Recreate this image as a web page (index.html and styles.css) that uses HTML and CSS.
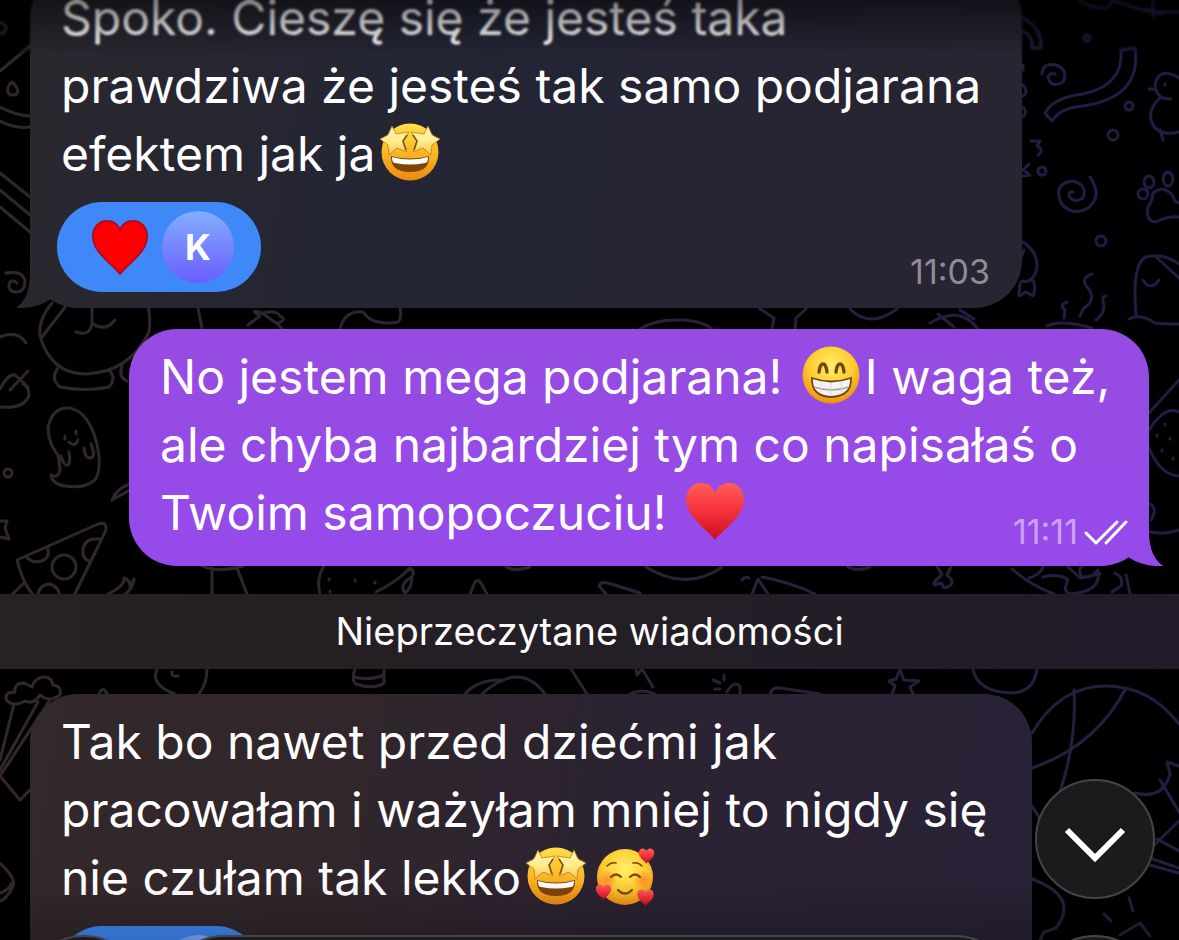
FILE: index.html
```html
<!DOCTYPE html>
<html lang="pl">
<head>
    <meta charset="UTF-8">
    <meta name="viewport" content="width=device-width, initial-scale=1.0">
    <title>Czat</title>
    <link rel="stylesheet" href="styles.css">
</head>
<body>

<!-- Shared shapes -->
<svg class="defs" width="0" height="0" aria-hidden="true">
    <defs>
        <radialGradient id="face" cx="50%" cy="35%" r="65%">
            <stop offset="0" stop-color="#fff06a"/>
            <stop offset="0.6" stop-color="#fdcb2e"/>
            <stop offset="1" stop-color="#ee8f12"/>
        </radialGradient>
        <linearGradient id="face-warm" x1="0" y1="0" x2="0" y2="1">
            <stop offset="0" stop-color="#ffe04a"/>
            <stop offset="0.5" stop-color="#fbb826"/>
            <stop offset="1" stop-color="#ec8a12"/>
        </linearGradient>
        <linearGradient id="star" x1="0" y1="0" x2="0" y2="1">
            <stop offset="0" stop-color="#fff6c0"/>
            <stop offset="0.55" stop-color="#ffeb8a"/>
            <stop offset="1" stop-color="#fcc24a"/>
        </linearGradient>
        <linearGradient id="heart" x1="0" y1="0" x2="0" y2="1">
            <stop offset="0" stop-color="#ff5f58"/>
            <stop offset="0.5" stop-color="#f5303a"/>
            <stop offset="1" stop-color="#c80d22"/>
        </linearGradient>
        <radialGradient id="blush">
            <stop offset="0" stop-color="#ff7a2a" stop-opacity="0.8"/>
            <stop offset="1" stop-color="#ff7a2a" stop-opacity="0"/>
        </radialGradient>
        <symbol id="heart-shape" viewBox="0 0 60 60">
            <path d="M30 59C24 50 1 36 1 19C1 8 8 2 16 2C23 2 28 6 30 12C32 6 37 2 44 2C52 2 59 8 59 19C59 36 36 50 30 59Z"/>
        </symbol>
        <symbol id="star-struck" viewBox="0 0 60 60">
            <circle cx="30" cy="30" r="28.5" fill="url(#face-warm)"/>
            <path d="M11 34Q30 39 49 34Q50 50 30 50Q10 50 11 34Z" fill="#804508"/>
            <path d="M12 35Q30 40 48 35Q48 41 45 41Q30 44 15 41Q12 41 12 35Z" fill="#fff"/>
            <g fill="url(#star)" stroke="#c07a12" stroke-width="0.8" stroke-linejoin="round">
                <path d="M12 4L16 12L29 10L23 19L27 30L17 26L9 33L8 23L0 17L8 13Z"/>
                <path d="M48 4L44 12L31 10L37 19L33 30L43 26L51 33L52 23L60 17L52 13Z"/>
            </g>
            <path d="M27 13L23 19L26 28M33 13L37 19L34 28" fill="none" stroke="#80500b" stroke-width="1.6"/>
        </symbol>
        <symbol id="grin" viewBox="0 0 60 60">
            <circle cx="30" cy="30" r="28.5" fill="url(#face)"/>
            <path d="M18 27Q19 19 22 19Q25 19 26 27M35 27Q36 19 39 19Q42 19 43 27" fill="none" stroke="#754707" stroke-width="3.4" stroke-linecap="round"/>
            <path d="M11 33Q30 40 50 33Q51 51 30 52Q10 51 11 33Z" fill="#f4f2f2" stroke="#72450c" stroke-width="1.8"/>
            <path d="M13 42Q30 48 48 42" fill="none" stroke="#a9a29c" stroke-width="1.4"/>
            <path d="M20 36V48M40 36V48M30 38V51" fill="none" stroke="#dcd8d5" stroke-width="0.8"/>
        </symbol>
        <symbol id="loving" viewBox="0 0 60 60">
            <circle cx="30" cy="31" r="28" fill="url(#face)"/>
            <circle cx="12" cy="34" r="10" fill="url(#blush)"/>
            <circle cx="48" cy="34" r="10" fill="url(#blush)"/>
            <g fill="none" stroke="#7c480c" stroke-linecap="round">
                <path d="M12 20Q16 16 21 17M38 17Q43 16 47 20" stroke-width="1.6"/>
                <path d="M16 31Q21 26 26 31M35 31Q40 26 45 31" stroke-width="2.2"/>
                <path d="M23 44Q30 51 37 44" stroke-width="2.2"/>
            </g>
            <use href="#heart-shape" x="43" y="2" width="17" height="16" fill="url(#heart)"/>
            <use href="#heart-shape" x="0" y="38" width="17" height="16" fill="url(#heart)"/>
            <use href="#heart-shape" x="42" y="43" width="17" height="17" fill="url(#heart)"/>
        </symbol>
        <symbol id="tail" viewBox="0 0 40 44">
            <path d="M14 0V10Q14 34 0 44Q20 45 35 35L40 20V0Z"/>
        </symbol>
    </defs>
</svg>

<!-- Doodle wallpaper -->
<svg class="wallpaper" viewBox="0 0 1179 940" preserveAspectRatio="xMidYMid slice" aria-hidden="true">
    <defs>
        <linearGradient id="ink" gradientUnits="userSpaceOnUse" x1="0" y1="700" x2="1179" y2="300">
            <stop offset="0" stop-color="#33272b"/>
            <stop offset="0.5" stop-color="#2a2335"/>
            <stop offset="1" stop-color="#231b42"/>
        </linearGradient>
    </defs>
    <g stroke="url(#ink)">
        <!-- left edge -->
        <path d="M0 23Q7 24 6 29T0 33M0 71L30 46M0 107Q15 115 30 116M0 121Q15 129 30 127M0 173L30 197M0 190L30 215M0 207L30 232"/>
        <path d="M12 82C6 87 6 95 13 95S19 88 12 82Z"/>
        <path d="M6 273Q24 270 25 282Q24 293 15 292Q8 291 9 284Q12 278 17 283"/>
        <!-- bear -->
        <path d="M52 303Q38 320 40 336Q51 374 86 374Q130 372 149 332Q151 318 148 306M42 337L66 306M76 332Q90 337 92 323V308M92 323Q105 333 115 320M198 308L202 328"/>
        <path d="M58 368Q50 379 60 387Q85 392 109 387Q117 378 109 370M122 366Q118 377 127 381"/>
        <path d="M0 337Q18 330 26 343M0 389Q10 371 16 376L28 387M10 390L28 371M0 407Q25 409 29 395Q29 387 23 384"/>
        <!-- ghost -->
        <path d="M62 460Q48 445 48 428Q52 407 69 408Q85 410 94 434Q104 465 95 480Q84 489 65 486Q52 484 51 475Q58 479 60 470Q60 467 58 455"/>
        <path d="M65 436V439M76 431V434M69 442Q75 448 78 440M61 456Q64 466 67 465Q71 465 69 452M84 448Q85 459 91 458Q96 456 91 444"/>
        <circle cx="8" cy="473" r="4"/>
        <path d="M0 521L7 521L5 528L9 539L0 537M130 484Q117 488 112 500L130 490"/>
        <!-- pizza -->
        <path d="M17 560L98 524Q107 521 106 530L72 600M17 560Q23 584 34 596M26 556Q32 565 44 560Q51 555 47 547M101 539Q85 537 83 549Q82 559 89 561M0 606L24 583"/>
        <circle cx="64" cy="567" r="12"/>
        <path d="M38 594Q40 584 50 584Q59 587 60 596M108 594Q125 586 124 578Q130 580 130 586L134 579Q134 588 122 597"/>
        <path d="M212 568V594M237 568L247 594M202 566Q218 573 243 566M320 594Q316 578 324 566M376 592Q398 581 410 568Q418 574 407 580Q400 587 405 593Q412 588 412 577M470 594L475 582Q479 578 482 585L487 594"/>
        <path d="M329 579V580M355 580V581M375 582V583M330 591V592"/>
        <!-- strip between first two bubbles -->
        <path d="M248 325L260 316Q248 308 262 313Q277 310 280 316Q288 320 277 323L282 329M262 313L276 323M340 329Q345 310 363 312Q372 326 398 322Q402 318 400 308"/>
        <path d="M640 329Q655 319 683 320Q705 322 712 329M760 309L774 318L772 329M795 329L796 318L806 309M850 309Q870 329 897 309M930 323Q960 305 978 329M938 314L954 327M960 310L974 319"/>
        <!-- popcorn -->
        <path d="M10 703Q3 699 8 693L15 692Q14 683 24 683L32 687Q35 677 45 677Q52 678 53 685Q62 686 60 695Q49 703 40 695Q34 705 25 701Q16 706 10 703M14 704L0 760M38 702L0 770M50 700L0 776L20 800L30 790M99 694Q103 685 107 694"/>
        <path d="M0 863Q16 878 13 886Q7 899 0 901M0 893Q9 890 11 884"/>
        <path d="M157 669Q150 685 175 694M207 669Q207 684 199 694M172 672Q171 677 178 676M355 669Q351 680 356 684Q374 690 384 683V669M354 677Q370 681 384 675M465 694Q477 680 500 680M482 694Q520 660 545 694"/>
        <!-- strip under the outgoing bubble -->
        <path d="M506 567Q516 572 530 567M646 567Q687 592 722 567M606 594L599 586Q600 581 608 583L640 593M742 580Q745 576 749 578M752 594L758 579L768 594M762 577Q790 582 815 594M848 567Q858 572 870 567M937 566L942 575Q931 583 935 585Q940 582 942 584Q943 590 949 586Q956 582 947 575L951 567"/>
        <path d="M571 669L587 694M636 669L637 675L642 669L653 687M630 694Q642 688 655 694M715 689H720M713 680L720 683M724 675V680M727 692Q734 680 740 686V694M770 694Q772 687 780 688L820 694"/>
        <path d="M900 670L904 680L919 681L910 687L913 694M900 670L896 679L889 681L895 686L892 694M973 669Q977 692 1012 693Q1034 692 1037 669"/>
        <!-- right edge, upper half -->
        <path d="M1080 1Q1100 12 1110 6Q1113 1 1110 0L1150 12H1179M1153 0V17M1147 9L1160 14"/>
        <path d="M1023 18Q1042 28 1041 48H1032Q1033 36 1023 31"/>
        <path d="M1042 74Q1043 62 1056 65Q1069 70 1063 82Q1051 89 1048 77Q1050 72 1055 74"/>
        <path d="M1121 50L1135 48Q1142 98 1082 106Q1060 108 1052 121L1045 113Q1054 97 1083 94Q1124 85 1121 50Z"/>
        <circle cx="1087" cy="38" r="3"/>
        <circle cx="1129" cy="106" r="4"/>
        <circle cx="1113" cy="135" r="5"/>
        <circle cx="1101" cy="241" r="5"/>
        <circle cx="1042" cy="171" r="4"/>
        <path d="M1031 141L1040 141L1037 146Q1045 150 1038 155M1029 164L1023 170L1030 175L1023 176M1023 65V70M1023 85Q1029 92 1023 96M1023 107Q1028 112 1023 117"/>
        <path d="M1090 177Q1103 196 1088 208Q1072 217 1061 203Q1053 183 1073 181Q1088 185 1083 198Q1074 204 1069 196Q1069 191 1073 192"/>
        <path d="M1179 78Q1160 66 1155 84Q1155 94 1163 98L1171 99M1160 98Q1144 113 1155 128Q1165 136 1179 132M1149 89H1156M1160 130L1163 140M1165 84V85"/>
        <ellipse cx="1149" cy="182" rx="5" ry="6"/>
        <ellipse cx="1168" cy="179" rx="5" ry="7"/>
        <circle cx="1143" cy="194" r="5"/>
        <path d="M1179 203Q1174 202 1173 196Q1163 184 1153 193Q1152 202 1148 207Q1145 221 1156 222Q1167 216 1179 217"/>
        <path d="M1023 242Q1038 252 1037 268Q1033 284 1022 281M1020 283L1019 296L1026 292L1033 296Q1037 286 1032 279M1024 250L1020 260"/>
        <path d="M1092 274Q1080 278 1087 287Q1098 299 1083 309L1080 316M1106 296Q1101 296 1104 306Q1104 314 1096 320M1067 302Q1059 305 1065 310L1064 318M1047 326Q1060 319 1092 328"/>
        <path d="M1136 315Q1131 255 1151 256Q1165 254 1179 264M1156 257L1179 278M1143 280Q1150 292 1159 280M1129 319Q1140 313 1155 323Q1165 324 1179 324"/>
        <!-- right edge, lower half -->
        <path d="M1149 413L1179 380M1149 430Q1165 405 1179 412M1149 448Q1160 475 1179 476M1157 435V436M1165 424V425M1170 438V439M1162 450V451M1173 458V459"/>
        <path d="M1150 504Q1158 508 1151 520M1150 532Q1165 535 1179 530M1012 569Q1030 585 1054 594M1029 578Q1040 575 1043 567M1043 577Q1060 573 1068 580Q1062 592 1070 594Q1102 592 1098 570Q1090 580 1081 576Q1077 567 1085 565M1068 567L1080 578L1100 574M1115 573Q1124 577 1121 586L1112 592M1126 575L1130 594"/>
        <path d="M1032 733Q1060 686 1105 686Q1150 686 1179 724M1032 768Q1096 746 1126 688M1074 690Q1077 740 1060 792M1032 806L1042 822"/>
        <path d="M1135 793Q1163 800 1170 774L1167 762L1179 766M1160 780L1179 812M1150 849L1179 821M1157 839L1179 851M1150 858L1179 868M1150 865L1179 873"/>
        <path d="M1032 879Q1080 897 1056 928L1044 932L1040 940M1129 898L1133 911M1104 914L1111 921M1120 935L1140 923L1150 936"/>
    </g>
</svg>

<main class="chat">
    <article class="bubble bubble-in bubble-first">
        <p>Spoko. Cieszę się że jesteś taka<br>prawdziwa że jesteś tak samo podjarana<br>efektem jak ja<svg class="emoji" role="img" aria-label="🤩"><use href="#star-struck"/></svg></p>
        <button class="reaction" type="button">
            <svg class="reaction-heart" viewBox="0 0 60 60" aria-hidden="true"><use href="#heart-shape" width="60" height="60"/></svg>
            <span class="avatar">K</span>
        </button>
        <time class="time">11:03</time>
        <svg class="tail tail-left" aria-hidden="true"><use href="#tail"/></svg>
    </article>

    <article class="bubble bubble-out">
        <p>No jestem mega podjarana! <svg class="emoji" role="img" aria-label="😁"><use href="#grin"/></svg>I waga też,<br>ale chyba najbardziej tym co napisałaś o<br>Twoim samopoczuciu! <svg class="emoji emoji-heart" role="img" aria-label="❤️"><use href="#heart-shape"/></svg></p>
        <div class="time">
            <time>11:11</time>
            <svg class="checks" viewBox="0 0 44 26" aria-hidden="true"><path d="M2 14L12 24L33 3M22 24L42 3"/></svg>
        </div>
        <svg class="tail tail-right" aria-hidden="true"><use href="#tail"/></svg>
    </article>

    <h2 class="unread">Nieprzeczytane wiadomości</h2>

    <article class="bubble bubble-in bubble-last">
        <p>Tak bo nawet przed dziećmi jak<br>pracowałam i ważyłam mniej to nigdy się<br>nie czułam tak lekko<svg class="emoji" role="img" aria-label="🤩"><use href="#star-struck"/></svg><svg class="emoji" role="img" aria-label="🥰"><use href="#loving"/></svg></p>
        <button class="reaction" type="button">
            <svg class="reaction-heart" viewBox="0 0 60 60" aria-hidden="true"><use href="#heart-shape" width="60" height="60"/></svg>
            <span class="avatar"></span>
        </button>
    </article>
</main>

<div class="fade fade-top"></div>
<div class="fade fade-bottom"></div>

<div class="controls">
    <button class="round-btn" type="button" aria-label="Przewiń w dół">
        <svg viewBox="0 0 60 34" aria-hidden="true"><path d="M2 2L30 30L58 2"/></svg>
    </button>
    <form class="composer">
        <button class="round-btn" type="button" aria-label="Załącz"></button>
        <input class="field" type="text" aria-label="Wiadomość">
        <button class="round-btn" type="button" aria-label="Nagraj"></button>
    </form>
</div>

</body>
</html>
```

FILE: styles.css
```css
html,
body {
    height: 100%;
    margin: 0;
    overflow: hidden;
}
body {
    position: relative;
    background-color: #000;
    color: #fff;
    font-family: Inter, Roboto, sans-serif;
}
.defs {
    position: absolute;
}
.wallpaper {
    position: absolute;
    top: 0;
    left: 0;
    width: 100%;
    height: 100%;
    fill: none;
    stroke-width: 3;
    stroke-linecap: round;
    stroke-linejoin: round;
}
.chat {
    position: relative;
    display: flex;
    flex-direction: column;
    margin-top: -30px;
}

/* Bubbles */
.bubble {
    position: relative;
    box-sizing: border-box;
    padding: 14px 31px 19px;
    border-radius: 48px;
}
.bubble p {
    margin: 0;
    font-size: 48px;
    line-height: 68px;
    white-space: nowrap;
}
.bubble-in {
    align-self: flex-start;
    margin-left: 30px;
}
.bubble-first {
    width: calc(100% - 187px);
    padding-bottom: 16px;
    background: linear-gradient(100deg, #2a282e 0%, #232535 45%, #292431 100%);
}
.bubble-out {
    align-self: flex-end;
    width: calc(100% - 159px);
    margin: 21px 30px 28px 0;
    background: linear-gradient(#964be1, #964aeb);
}
.bubble-last {
    width: calc(100% - 177px);
    margin-top: 25px;
    background: linear-gradient(100deg, #33282a 0%, #30262b 30%, #2b2232 60%, #292136 100%);
}
.tail {
    position: absolute;
    bottom: 0;
    width: 40px;
    height: 44px;
}
.tail-left {
    left: -14px;
    fill: #2a282e;
}
.tail-right {
    right: -14px;
    fill: #964aeb;
    transform: scaleX(-1);
}
.emoji {
    width: 60px;
    height: 60px;
    margin: 0 4px 0 5px;
    vertical-align: -11px;
}
.emoji-heart {
    fill: url(#heart);
}
.time {
    position: absolute;
    z-index: 1;
    right: 32px;
    bottom: 16px;
    color: #8e8c98;
    font-size: 34px;
    line-height: 40px;
}
.bubble-out .time {
    display: flex;
    align-items: center;
    gap: 6px;
    right: 21px;
    bottom: 14px;
    color: #cba2f3;
}
.checks {
    width: 44px;
    height: 26px;
    overflow: visible;
    fill: none;
    stroke: #fff;
    stroke-width: 3;
    stroke-linecap: round;
    stroke-linejoin: round;
}

/* Reactions */
.reaction {
    display: flex;
    align-items: center;
    gap: 14px;
    margin: 14px 0 0 -4px;
    padding: 9px 27px 9px 35px;
    border: none;
    border-radius: 45px;
    background-color: #3f88f7;
    font-family: inherit;
}
.reaction-heart {
    width: 56px;
    height: 56px;
    overflow: visible;
    fill: #fe0000;
    stroke: #a80d2c;
    stroke-width: 2;
}
.avatar {
    width: 72px;
    height: 72px;
    border-radius: 50%;
    background: linear-gradient(#82aefe, #6a5dfd);
    color: #fff;
    font-size: 36px;
    font-weight: 700;
    line-height: 72px;
    text-align: center;
}

/* Unread separator */
.unread {
    margin: 0;
    background: linear-gradient(90deg, #262122, #251f25 40%, #211b2a);
    font-size: 38px;
    font-weight: 400;
    line-height: 75px;
    text-align: center;
}

/* Fades over the chat edges */
.fade {
    position: absolute;
    left: 0;
    right: 0;
    pointer-events: none;
}
.fade-top {
    top: 0;
    height: 54px;
    background: linear-gradient(rgba(0, 0, 0, 0.5), rgba(0, 0, 0, 0));
    backdrop-filter: blur(1px);
}
.fade-bottom {
    bottom: 0;
    height: 60px;
    background: linear-gradient(rgba(0, 0, 0, 0), rgba(0, 0, 0, 0.2));
}

/* Floating controls, the composer runs off the bottom edge */
.controls {
    position: absolute;
    left: 24px;
    right: 24px;
    bottom: -115px;
    display: flex;
    flex-direction: column;
    align-items: flex-end;
    gap: 36px;
}
.round-btn,
.field {
    box-sizing: border-box;
    height: 120px;
    border: 2px solid #454446;
    border-radius: 60px;
    background-color: #1b1a1d;
}
.round-btn {
    display: flex;
    align-items: center;
    justify-content: center;
    width: 120px;
    padding: 12px 0 0;
}
.round-btn svg {
    width: 60px;
    height: 34px;
    overflow: visible;
    fill: none;
    stroke: #fff;
    stroke-width: 6;
}
.composer {
    display: flex;
    gap: 20px;
    width: 100%;
}
.field {
    flex: 1;
    min-width: 0;
    color: #fff;
}
```
